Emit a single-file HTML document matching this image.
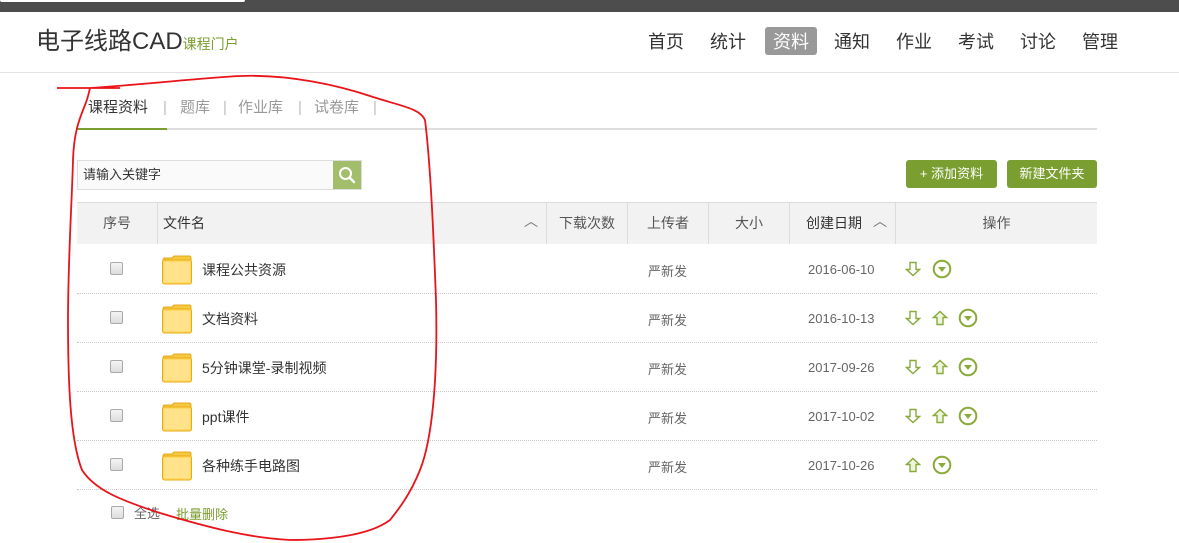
<!DOCTYPE html>
<html><head><meta charset="utf-8"><style>
*{margin:0;padding:0;box-sizing:border-box}
body{width:1179px;height:543px;overflow:hidden;background:#fff;font-family:"Liberation Sans","Noto Sans CJK SC",sans-serif;color:#333;position:relative}
.a{position:absolute;white-space:nowrap}
.topbar{left:0;top:0;width:1179px;height:12px;background:#4d4d4d}
.tab{left:0;top:0;width:245px;height:2px;background:#fff;border-radius:0 0 3px 3px}
.hline{left:0;top:72px;width:1179px;height:1px;background:#e2e2e2}
.nav{top:30px;font-size:18px;color:#333;line-height:24px}
.th{top:203px;height:41px;background:#f2f2f2;border-right:1px solid #dcdcdc;font-size:14px;color:#555;line-height:41px}
.row{left:77px;width:1020px;height:1px;border-top:1px dotted #c8c8c8}
.cb{width:13px;height:13px;border:1px solid #aaa;border-radius:2px;background:linear-gradient(#f4f4f4,#ddd)}
.fn{font-size:14px;color:#333}
.up{font-size:13px;color:#666}
.dt{font-size:13px;color:#666}
.tb{top:98px;font-size:15px;color:#999;line-height:20px}
</style></head><body>
<div class="a topbar"></div><div class="a tab"></div>
<div class="a" style="left:36px;top:26px;font-size:24px;color:#333;line-height:32px">电子线路CAD<span style="font-size:14px;color:#7a9e2f">课程门户</span></div>
<div class="a" style="left:765px;top:27px;width:52px;height:28px;background:#999;border-radius:3px"></div>
<div class="a nav" style="left:648px">首页</div>
<div class="a nav" style="left:710px">统计</div>
<div class="a nav" style="left:773px;color:#fff">资料</div>
<div class="a nav" style="left:834px">通知</div>
<div class="a nav" style="left:896px">作业</div>
<div class="a nav" style="left:958px">考试</div>
<div class="a nav" style="left:1020px">讨论</div>
<div class="a nav" style="left:1082px">管理</div>
<div class="a hline"></div>

<div class="a tb" style="left:88px;color:#333">课程资料</div>
<div class="a tb" style="left:163px;color:#bbb">|</div>
<div class="a tb" style="left:180px">题库</div>
<div class="a tb" style="left:223px;color:#bbb">|</div>
<div class="a tb" style="left:238px">作业库</div>
<div class="a tb" style="left:298px;color:#bbb">|</div>
<div class="a tb" style="left:314px">试卷库</div>
<div class="a tb" style="left:373px;color:#bbb">|</div>
<div class="a" style="left:77px;top:128px;width:1020px;height:2px;background:#ddd"></div>
<div class="a" style="left:77px;top:128px;width:90px;height:2px;background:#7a9e2f"></div>

<div class="a" style="left:77px;top:160px;width:256px;height:30px;border:1px solid #ddd;border-right:none;background:#fafafa;font-size:13px;color:#333;line-height:28px;padding-left:5px">请输入关键字</div>
<div class="a" style="left:333px;top:160px;width:29px;height:30px;background:#a3be6b;border:1px solid #ddd;border-left:none">
<svg width="28" height="28" viewBox="0 0 28 28"><circle cx="12.5" cy="12.5" r="5.5" fill="none" stroke="#fff" stroke-width="2"/><line x1="16.5" y1="16.5" x2="21" y2="21" stroke="#fff" stroke-width="2.4" stroke-linecap="round"/></svg></div>
<div class="a" style="left:906px;top:160px;width:91px;height:28px;background:#7a9e2f;border-radius:3px;color:#fff;font-size:13px;line-height:28px;text-align:center">+ 添加资料</div>
<div class="a" style="left:1007px;top:160px;width:90px;height:28px;background:#7a9e2f;border-radius:3px;color:#fff;font-size:13px;line-height:28px;text-align:center">新建文件夹</div>

<div class="a" style="left:77px;top:202px;width:1020px;height:1px;background:#dcdcdc"></div>
<div class="a th" style="left:77px;width:81px;text-align:center">序号</div>
<div class="a th" style="left:158px;width:389px;padding-left:5px;color:#333">文件名<span style="position:absolute;right:8px;top:-2px;color:#777">︿</span></div>
<div class="a th" style="left:547px;width:81px;text-align:center">下载次数</div>
<div class="a th" style="left:628px;width:81px;text-align:center">上传者</div>
<div class="a th" style="left:709px;width:81px;text-align:center">大小</div>
<div class="a th" style="left:790px;width:106px;padding-left:16px;color:#333">创建日期<span style="position:absolute;right:8px;top:-2px;color:#777">︿</span></div>
<div class="a th" style="left:896px;width:201px;text-align:center;border-right:none">操作</div>

<svg width="0" height="0" style="position:absolute"><defs>
<symbol id="fold" viewBox="0 0 30 30"><path d="M1 5 Q1 3 3 3 H10 L12 1 H27 Q29 1 29 3 V6 H1Z" fill="#f5c842" stroke="#e6a817"/><rect x="0.5" y="5" width="29" height="24" rx="2" fill="#ffd966" stroke="#eaaa10"/><rect x="2" y="7" width="26" height="20" fill="#ffe28a"/></symbol>
<symbol id="dn" viewBox="0 0 16 16"><path d="M5 1.5H11V8.5H14.5L8 14.5L1.5 8.5H5Z" fill="#fff" stroke="#8aab3c" stroke-width="1.4"/></symbol>
<symbol id="upa" viewBox="0 0 16 16"><path d="M5 14.5H11V7.5H14.5L8 1.5L1.5 7.5H5Z" fill="#eef5dc" stroke="#8aab3c" stroke-width="1.4"/></symbol>
<symbol id="ci" viewBox="0 0 20 20"><circle cx="10" cy="10" r="8.3" fill="#fff" stroke="#8aab3c" stroke-width="2"/><path d="M6 8H14L10 13Z" fill="#8aab3c"/></symbol>
</defs></svg>

<div class="a row" style="top:293px"></div>
<div class="a row" style="top:342px"></div>
<div class="a row" style="top:391px"></div>
<div class="a row" style="top:440px"></div>
<div class="a row" style="top:489px"></div>

<div class="a cb" style="left:110px;top:262px"></div>
<svg class="a" style="left:162px;top:255px" width="30" height="30"><use href="#fold"/></svg>
<div class="a fn" style="left:202px;top:260px">课程公共资源</div>
<div class="a up" style="left:648px;top:261px">严新发</div>
<div class="a dt" style="left:808px;top:262px">2016-06-10</div>
<svg class="a" style="left:905px;top:261px" width="16" height="16"><use href="#dn"/></svg>
<svg class="a" style="left:932px;top:259px" width="20" height="20"><use href="#ci"/></svg>

<div class="a cb" style="left:110px;top:311px"></div>
<svg class="a" style="left:162px;top:304px" width="30" height="30"><use href="#fold"/></svg>
<div class="a fn" style="left:202px;top:309px">文档资料</div>
<div class="a up" style="left:648px;top:310px">严新发</div>
<div class="a dt" style="left:808px;top:311px">2016-10-13</div>
<svg class="a" style="left:905px;top:310px" width="16" height="16"><use href="#dn"/></svg>
<svg class="a" style="left:932px;top:310px" width="16" height="16"><use href="#upa"/></svg>
<svg class="a" style="left:958px;top:308px" width="20" height="20"><use href="#ci"/></svg>

<div class="a cb" style="left:110px;top:360px"></div>
<svg class="a" style="left:162px;top:353px" width="30" height="30"><use href="#fold"/></svg>
<div class="a fn" style="left:202px;top:358px">5分钟课堂-录制视频</div>
<div class="a up" style="left:648px;top:359px">严新发</div>
<div class="a dt" style="left:808px;top:360px">2017-09-26</div>
<svg class="a" style="left:905px;top:359px" width="16" height="16"><use href="#dn"/></svg>
<svg class="a" style="left:932px;top:359px" width="16" height="16"><use href="#upa"/></svg>
<svg class="a" style="left:958px;top:357px" width="20" height="20"><use href="#ci"/></svg>

<div class="a cb" style="left:110px;top:409px"></div>
<svg class="a" style="left:162px;top:402px" width="30" height="30"><use href="#fold"/></svg>
<div class="a fn" style="left:202px;top:407px">ppt课件</div>
<div class="a up" style="left:648px;top:408px">严新发</div>
<div class="a dt" style="left:808px;top:409px">2017-10-02</div>
<svg class="a" style="left:905px;top:408px" width="16" height="16"><use href="#dn"/></svg>
<svg class="a" style="left:932px;top:408px" width="16" height="16"><use href="#upa"/></svg>
<svg class="a" style="left:958px;top:406px" width="20" height="20"><use href="#ci"/></svg>

<div class="a cb" style="left:110px;top:458px"></div>
<svg class="a" style="left:162px;top:451px" width="30" height="30"><use href="#fold"/></svg>
<div class="a fn" style="left:202px;top:456px">各种练手电路图</div>
<div class="a up" style="left:648px;top:457px">严新发</div>
<div class="a dt" style="left:808px;top:458px">2017-10-26</div>
<svg class="a" style="left:905px;top:457px" width="16" height="16"><use href="#upa"/></svg>
<svg class="a" style="left:932px;top:455px" width="20" height="20"><use href="#ci"/></svg>

<div class="a cb" style="left:111px;top:506px"></div>
<div class="a" style="left:134px;top:503px;font-size:13px;color:#666">全选</div>
<div class="a" style="left:176px;top:504px;font-size:13px;color:#7a9e2f">批量删除</div>

<svg class="a" style="left:0;top:0" width="1179" height="543">
<path d="M57 88 L120 88 M90 88 C150 84 200 78 240 76 C290 74 340 86 370 96 C400 106 420 108 425 120 C430 160 433 220 436 300 C438 380 432 440 420 470 C410 495 398 510 390 520 C370 535 330 540 290 540 C250 538 210 528 160 513 C120 500 95 490 82 470 C70 440 68 380 68 320 C68 260 72 200 73 160 C74 130 80 118 85 105 C88 98 89 92 90 88" fill="none" stroke="#e8141a" stroke-width="1.8"/>
</svg>
</body></html>
